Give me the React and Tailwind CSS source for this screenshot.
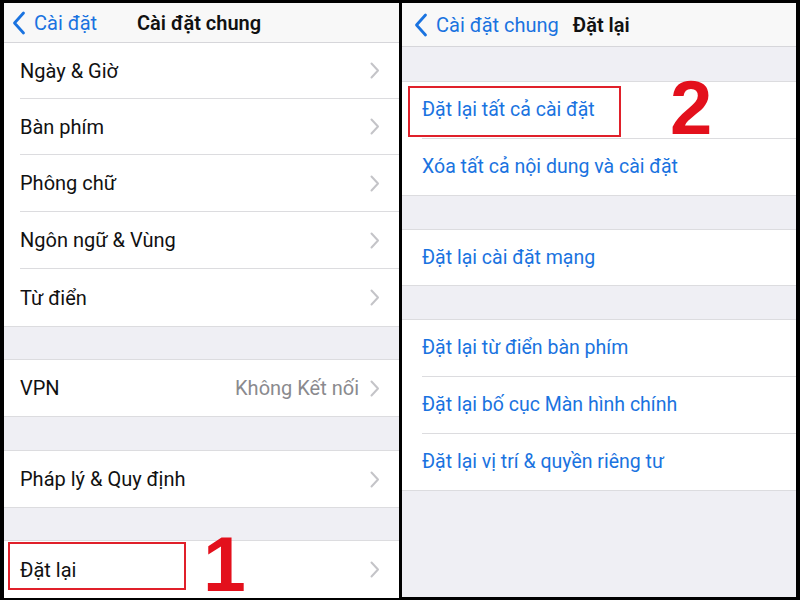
import React from "react";

const Chevron = () => (
  <svg width="10" height="17" viewBox="0 0 10 17" className="shrink-0">
    <path d="M1.5 1.5 L8 8.5 L1.5 15.5" fill="none" stroke="#c4c4c8" strokeWidth="2" strokeLinecap="round" strokeLinejoin="round" />
  </svg>
);

const BackChevron = () => (
  <svg width="14" height="24" viewBox="0 0 14 24" className="shrink-0">
    <path d="M11.5 2 L2.5 12 L11.5 22" fill="none" stroke="#1a73e0" strokeWidth="2.8" strokeLinecap="round" strokeLinejoin="round" />
  </svg>
);

const font = { fontFamily: "Roboto, 'Noto Sans', sans-serif" };

function LeftRow({ label, value, last, h }) {
  return (
    <div className="bg-white pl-4 flex shrink-0" style={{ height: h }}>
      <div className={`flex-1 flex items-center pr-[19px] ${last ? "" : "border-b border-[#dcdcdf]"}`}>
        <span className="flex-1 text-[20px] text-[#111]">{label}</span>
        {value && <span className="text-[20px] text-[#8a8a8e] mr-[11px]">{value}</span>}
        <Chevron />
      </div>
    </div>
  );
}

function RightRow({ label, last, h }) {
  return (
    <div className="bg-white pl-5 flex shrink-0" style={{ height: h }}>
      <div className={`flex-1 flex items-center ${last ? "" : "border-b border-[#dcdcdf]"}`}>
        <span className="text-[19.5px] text-[#1a73e0]">{label}</span>
      </div>
    </div>
  );
}

export default function App() {
  return (
    <div className="w-[800px] h-[600px] bg-black pt-[3px] pb-[3px] pl-[4px] pr-[4px] flex gap-[3px] overflow-hidden" style={font}>
      {/* Left panel */}
      <div className="relative w-[395px] h-full bg-[#efeff4] flex flex-col">
        <div className="h-[40px] bg-[#f8f8f8] border-b border-[#d6d6da] flex items-center pl-[8px] relative shrink-0">
          <BackChevron />
          <span className="ml-[8px] text-[20px] text-[#1a73e0]">Cài đặt</span>
          <span className="absolute left-[133px] text-[20px] font-semibold text-[#111]">Cài đặt chung</span>
        </div>
        <LeftRow label="Ngày & Giờ" h={56} />
        <LeftRow label="Bàn phím" h={56} />
        <LeftRow label="Phông chữ" h={57} />
        <LeftRow label="Ngôn ngữ & Vùng" h={57} />
        <LeftRow label="Từ điển" h={57} last />
        <div className="h-[34px] border-t border-b border-[#dcdcdf] shrink-0" />
        <LeftRow label="VPN" value="Không Kết nối" h={56} last />
        <div className="h-[35px] border-t border-b border-[#dcdcdf] shrink-0" />
        <LeftRow label="Pháp lý & Quy định" h={56} last />
        <div className="h-[34px] border-t border-b border-[#dcdcdf] shrink-0" />
        <LeftRow label="Đặt lại" h={57} last />

        <div className="absolute left-[4px] top-[539px] w-[178px] h-[48px] border-2 border-[#e0202a]" />
        <div className="absolute left-[199px] top-[532px] text-[77px] leading-[58px] font-bold text-[#e3101c]" style={{ fontFamily: "'Liberation Sans', Arial, sans-serif" }}>1</div>
      </div>

      {/* Right panel */}
      <div className="relative flex-1 h-full bg-[#efeff4] flex flex-col overflow-hidden">
        <div className="h-[44px] bg-[#f8f8f8] border-b border-[#d6d6da] flex items-center pl-[12px] shrink-0">
          <BackChevron />
          <span className="ml-[8px] text-[20px] text-[#1a73e0]">Cài đặt chung</span>
          <span className="ml-[14px] text-[20px] font-semibold text-[#111]">Đặt lại</span>
        </div>
        <div className="h-[35px] border-b border-[#dcdcdf] shrink-0" />
        <RightRow label="Đặt lại tất cả cài đặt" h={57} />
        <RightRow label="Xóa tất cả nội dung và cài đặt" h={56} last />
        <div className="h-[35px] border-t border-b border-[#dcdcdf] shrink-0" />
        <RightRow label="Đặt lại cài đặt mạng" h={55} last />
        <div className="h-[35px] border-t border-b border-[#dcdcdf] shrink-0" />
        <RightRow label="Đặt lại từ điển bàn phím" h={57} />
        <RightRow label="Đặt lại bố cục Màn hình chính" h={57} />
        <RightRow label="Đặt lại vị trí & quyền riêng tư" h={56} last />
        <div className="border-t border-[#dcdcdf]" />

        <div className="absolute left-[6px] top-[83px] w-[213px] h-[51px] border-2 border-[#e0202a]" />
        <div className="absolute left-[268px] top-[76px] text-[76px] leading-[58px] font-bold text-[#e3101c]" style={{ fontFamily: "'Liberation Sans', Arial, sans-serif" }}>2</div>
      </div>
    </div>
  );
}
